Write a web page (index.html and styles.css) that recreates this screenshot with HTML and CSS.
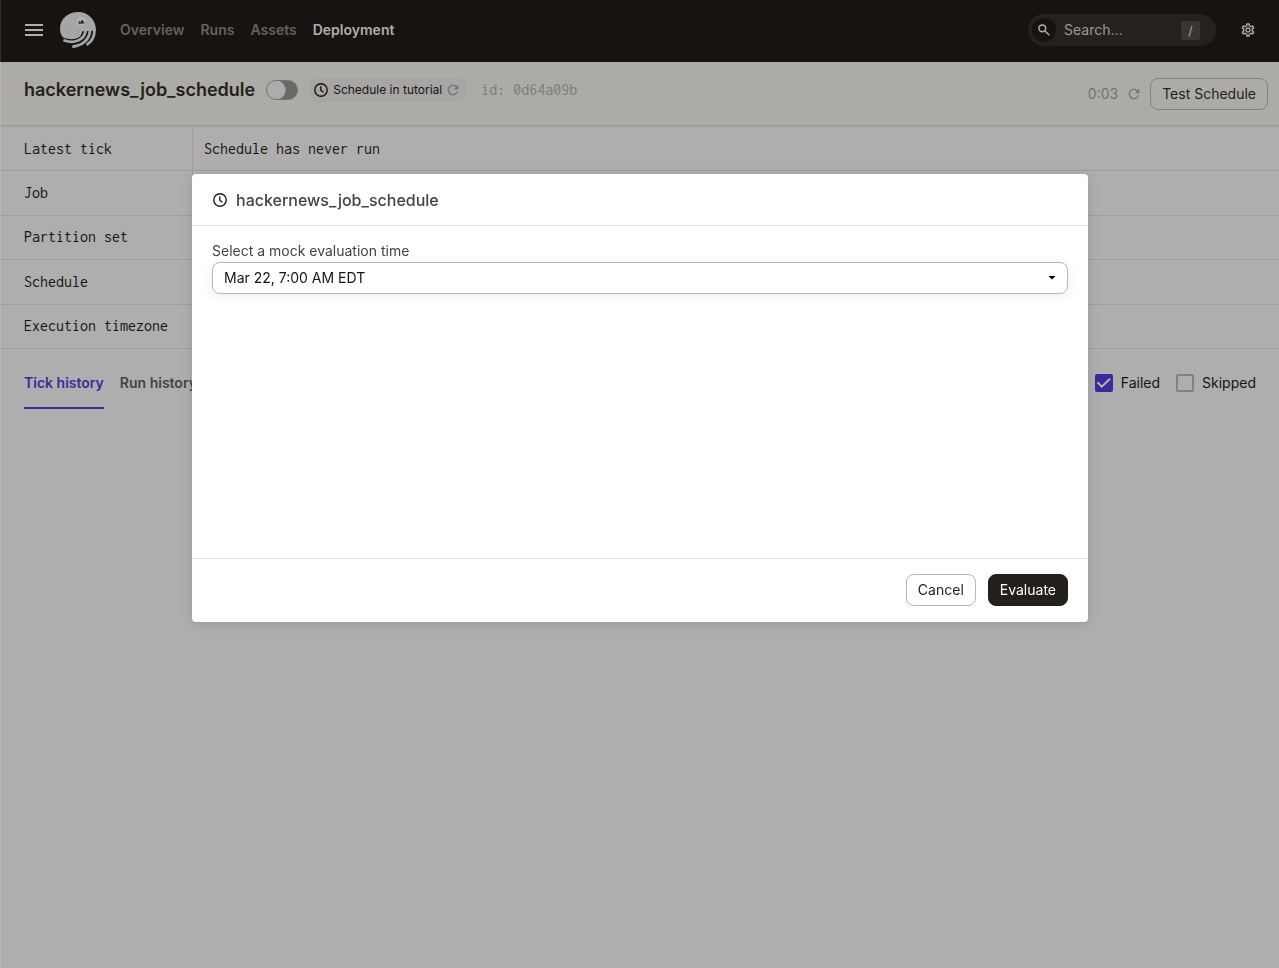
FILE: index.html
```html
<!DOCTYPE html>
<html lang="en">
<head>
  <meta charset="UTF-8">
  <title>hackernews_job_schedule</title>
  <link rel="stylesheet" href="styles.css">
</head>
<body>
  <header class="topbar">
    <button class="icon-button menu" aria-label="Menu">
      <svg width="18" height="12" viewBox="0 0 18 12"><path d="M0 0h18v2H0zM0 5h18v2H0zM0 10h18v2H0z" fill="currentColor"/></svg>
    </button>
    <a class="logo" href="#" aria-label="Home">
      <svg width="36" height="36" viewBox="0 0 36 36">
        <path d="M18 0C28 0 36 7.500 36 18.500L22 19.500C22 27 12 29 3 25.500C1 23 0 20 0 16.500C0 7 8 0 18 0Z" fill="#a6a6a7"/>
        <g fill="none" stroke="#a6a6a7" stroke-width="2.800" stroke-linecap="round">
          <path d="M4.500 28.500C14 32 24 28 25.500 19.500"/>
          <path d="M13.500 34.500C22 33.500 29 28 29.900 19.500"/>
          <path d="M27.500 32.200C31.500 29.500 34.500 25 34.500 18"/>
        </g>
        <circle cx="21" cy="9" r="4.200" fill="#b5b5b6"/>
        <path d="M18.600 11.800C17.500 6.800 24.500 6.500 24.200 11.500Z" fill="#2a2724"/>
        <circle cx="20.400" cy="9" r="1" fill="#b5b5b6"/>
        <g fill="#808084"><circle cx="4.500" cy="18" r=".5"/><circle cx="7" cy="15.500" r=".5"/><circle cx="7.500" cy="20.500" r=".5"/><circle cx="17" cy="21.500" r=".5"/><circle cx="19" cy="19" r=".5"/></g>
      </svg>
    </a>
    <nav class="nav">
      <a href="#">Overview</a>
      <a href="#">Runs</a>
      <a href="#">Assets</a>
      <a href="#" class="active">Deployment</a>
    </nav>
    <label class="search">
      <span class="search-icon">
        <svg width="12" height="12" viewBox="0 0 12 12" fill="none" stroke="currentColor" stroke-width="1.500"><circle cx="4.300" cy="4.300" r="3.400"/><path d="M6.800 6.800L11.300 11.300"/></svg>
      </span>
      <input type="text" placeholder="Search…" aria-label="Search">
      <kbd>/</kbd>
    </label>
    <button class="icon-button" aria-label="Settings">
      <svg width="16" height="16" viewBox="0 0 24 24" fill="currentColor"><path d="M19.430 12.980c.04-.32.07-.64.07-.98 0-.34-.03-.66-.07-.98l2.110-1.650c.19-.15.24-.42.12-.64l-2-3.460c-.09-.16-.26-.25-.44-.25-.06 0-.12.010-.17.030l-2.490 1c-.52-.4-1.080-.73-1.690-.98l-.38-2.650C14.460 2.180 14.250 2 14 2h-4c-.25 0-.46.18-.49.42l-.38 2.650c-.61.25-1.170.59-1.690.98l-2.490-1c-.06-.02-.12-.03-.18-.03-.17 0-.34.090-.43.25l-2 3.460c-.13.22-.07.49.12.64l2.110 1.650c-.04.32-.07.65-.07.98 0 .33.030.66.070.98l-2.110 1.650c-.19.15-.24.42-.12.64l2 3.460c.09.16.26.25.44.25.06 0 .12-.01.17-.03l2.490-1c.52.4 1.080.73 1.690.98l.38 2.650c.03.24.24.42.49.42h4c.25 0 .46-.18.49-.42l.38-2.650c.61-.25 1.170-.59 1.690-.98l2.490 1c.06.020.12.030.18.030.17 0 .34-.09.43-.25l2-3.460c.12-.22.070-.49-.12-.64l-2.110-1.650zm-1.980-1.710c.04.31.050.52.050.73 0 .21-.02.43-.05.73l-.14 1.130.89.7 1.080.84-.7 1.210-1.270-.51-1.040-.42-.9.68c-.43.32-.84.56-1.250.73l-1.060.43-.16 1.130-.2 1.350h-1.400l-.19-1.350-.16-1.130-1.060-.43c-.43-.18-.83-.41-1.230-.71l-.91-.7-1.060.43-1.270.51-.7-1.210 1.080-.84.89-.7-.14-1.130c-.03-.31-.05-.54-.05-.74s.02-.43.050-.73l.14-1.130-.89-.7-1.080-.84.7-1.210 1.270.51 1.040.42.9-.68c.43-.32.84-.56 1.250-.73l1.060-.43.16-1.130.2-1.350h1.390l.19 1.350.16 1.130 1.060.43c.43.18.83.41 1.230.71l.91.7 1.060-.43 1.270-.51.7 1.210-1.070.85-.89.7.14 1.130zM12 8c-2.210 0-4 1.790-4 4s1.790 4 4 4 4-1.790 4-4-1.790-4-4-4zm0 6c-1.100 0-2-.9-2-2s.9-2 2-2 2 .9 2 2-.9 2-2 2z"/></svg>
    </button>
  </header>

  <section class="page-header">
    <div class="page-title">
      <h1>hackernews_job_schedule</h1>
      <input type="checkbox" class="switch" aria-label="Schedule running">
      <span class="tag">
        <svg width="14" height="14" viewBox="0 0 14 14" fill="none" stroke="currentColor" stroke-width="1.400"><circle cx="7" cy="7" r="6.200"/><path d="M6.800 3.200V7.200L9.500 9.300"/></svg>
        <span>Schedule in tutorial</span>
        <svg class="muted" width="12" height="12" viewBox="3 3 18 18" fill="currentColor"><path d="M17.650 6.350C16.200 4.900 14.210 4 12 4c-4.420 0-7.990 3.580-7.990 8s3.570 8 7.990 8c3.730 0 6.840-2.550 7.730-6h-2.080c-.82 2.330-3.040 4-5.650 4-3.310 0-6-2.690-6-6s2.690-6 6-6c1.660 0 3.140.69 4.220 1.780L13 11h7V4l-2.350 2.350z"/></svg>
      </span>
      <span class="job-id">id: 0d64a09b</span>
    </div>
    <div class="page-actions">
      <span>0:03</span>
      <button class="icon-button refresh" aria-label="Refresh">
        <svg width="12" height="12" viewBox="3 3 18 18" fill="currentColor"><path d="M17.650 6.350C16.200 4.900 14.210 4 12 4c-4.420 0-7.990 3.580-7.990 8s3.570 8 7.990 8c3.730 0 6.840-2.550 7.730-6h-2.080c-.82 2.330-3.040 4-5.650 4-3.310 0-6-2.690-6-6s2.690-6 6-6c1.660 0 3.140.69 4.220 1.780L13 11h7V4l-2.350 2.350z"/></svg>
      </button>
      <button class="button test">Test Schedule</button>
    </div>
  </section>

  <table class="details">
    <tr><th>Latest tick</th><td>Schedule has never run</td></tr>
    <tr><th>Job</th><td></td></tr>
    <tr><th>Partition set</th><td></td></tr>
    <tr><th>Schedule</th><td></td></tr>
    <tr><th>Execution timezone</th><td></td></tr>
  </table>

  <div class="history">
    <nav class="tabs">
      <a href="#" class="active">Tick history</a>
      <a href="#">Run history</a>
    </nav>
    <div class="filters">
      <label><input type="checkbox" checked>Failed</label>
      <label><input type="checkbox">Skipped</label>
    </div>
  </div>

  <div class="overlay">
    <div class="dialog" role="dialog" aria-labelledby="dialog-title">
      <div class="dialog-header">
        <svg width="16" height="16" viewBox="0 0 16 16" fill="none" stroke="#231f1b" stroke-width="1.400"><circle cx="8" cy="8" r="6.200"/><path d="M7.800 4.500V8.200L10.300 10.300"/></svg>
        <h2 id="dialog-title">hackernews_job_schedule</h2>
      </div>
      <div class="dialog-body">
        <label for="eval-time">Select a mock evaluation time</label>
        <div class="select">
          <select id="eval-time">
            <option>Mar 22, 7:00 AM EDT</option>
          </select>
          <svg width="8" height="4" viewBox="0 0 8 4"><path d="M.5 0h7L4 3.500z" fill="#000"/></svg>
        </div>
      </div>
      <div class="dialog-footer">
        <button class="button">Cancel</button>
        <button class="button primary">Evaluate</button>
      </div>
    </div>
  </div>
</body>
</html>
```
FILE: styles.css
```css
* {
  box-sizing: border-box;
}
body {
  margin: 0;
  min-height: 100vh;
  background-color: #aeaeae;
  color: #171512;
  font-family: Inter, sans-serif;
  font-size: 14px;
  line-height: 20px;
}
a {
  color: inherit;
  text-decoration: none;
}
h1, h2 {
  margin: 0;
}
svg {
  display: block;
  flex-shrink: 0;
}
button, input, select {
  font: inherit;
  color: inherit;
}
.icon-button {
  display: flex;
  padding: 0;
  border: none;
  background: none;
  cursor: pointer;
}
.topbar {
  display: flex;
  align-items: center;
  height: 62px;
  padding: 0 23px 2px 25px;
  background-color: #171310;
  color: #aeaeae;
}
.logo {
  margin: 0 24px 0 17px;
}
.nav {
  display: flex;
  gap: 16px;
  flex: 1;
  font-weight: 600;
  color: #646260;
}
.nav .active {
  color: #aeaeae;
}
.search {
  display: flex;
  align-items: center;
  width: 188px;
  height: 32px;
  margin-right: 24px;
  padding: 0 16px 0 4px;
  border-radius: 16px;
  background-color: #25221d;
}
.search-icon {
  display: flex;
  align-items: center;
  justify-content: center;
  width: 24px;
  height: 24px;
  border-radius: 12px;
  background-color: #171310;
}
.search input {
  flex: 1;
  min-width: 0;
  padding: 0 8px;
  border: none;
  outline: none;
  background: none;
}
.search input::placeholder {
  color: #9b9997;
  opacity: 1;
}
.search kbd {
  width: 19px;
  height: 19px;
  border-radius: 3px;
  background-color: #383633;
  text-align: center;
  font-family: inherit;
  font-size: 12px;
}
.page-header {
  display: flex;
  justify-content: space-between;
  height: 65px;
  padding: 16px 11px 0 24px;
  border-bottom: 2px solid #a09f9d;
  background-color: #acaba8;
}
.page-title {
  display: flex;
  align-items: center;
  height: 24px;
}
.page-title h1 {
  font-size: 18px;
  font-weight: 600;
  line-height: 24px;
  color: #231f1b;
}
.switch {
  appearance: none;
  width: 32px;
  height: 20px;
  margin: 0 11px;
  border-radius: 10px;
  border: 1px solid #737271;
  background: radial-gradient(circle at 9px 9px, #acacab 9px, #6a6968 10px);
}
.tag {
  display: flex;
  align-items: center;
  gap: 5px;
  height: 24px;
  padding: 0 8px 0 5px;
  border-radius: 8px;
  background-color: #a7a6a5;
  font-size: 12px;
}
.muted {
  color: #737271;
}
.job-id {
  margin-left: 14px;
  color: #7c7b79;
}
.job-id, .details {
  font-family: Inconsolata, "Liberation Mono", monospace;
  font-size: 16px;
}
.page-actions {
  display: flex;
  align-items: center;
  height: 32px;
  color: #737271;
}
.refresh {
  margin: 0 10px;
}
.button {
  height: 32px;
  padding: 0 11px;
  border: 1px solid #b8b7b6;
  border-radius: 8px;
  background: none;
  color: #231f1b;
  cursor: pointer;
}
.button.test {
  border-color: #838281;
}
.button.primary {
  border-color: #231f1b;
  background-color: #231f1b;
  color: #fff;
}
.details {
  width: 100%;
  height: 222px;
  border-spacing: 0;
}
.details th, .details td {
  padding: 0 11px;
  border-bottom: 1px solid #9e9e9f;
  text-align: left;
  font-weight: normal;
}
.details th {
  width: 193px;
  padding-left: 24px;
  border-right: 1px solid #9e9e9f;
}
.history {
  display: flex;
  justify-content: space-between;
  align-items: flex-start;
  padding: 24px 23px 0 24px;
}
.tabs {
  display: flex;
  gap: 16px;
  font-weight: 600;
  color: #444341;
}
.tabs a {
  padding-bottom: 14px;
  border-bottom: 2px solid transparent;
}
.tabs .active {
  border-color: #382c9b;
  color: #382c9b;
}
.filters {
  display: flex;
  gap: 16px;
}
.filters label {
  display: flex;
  align-items: center;
  gap: 8px;
}
.filters input {
  appearance: none;
  display: grid;
  place-items: center;
  width: 18px;
  height: 18px;
  margin: 0;
  border: 2px solid #838281;
  border-radius: 2px;
}
.filters input:checked {
  border-color: #382c9b;
  background-color: #382c9b;
}
.filters input:checked::before {
  content: "";
  width: 14px;
  height: 10px;
  background-color: #b4b4b4;
  clip-path: polygon(0 50%, 10% 36%, 36% 72%, 90% 0, 100% 14%, 36% 100%);
}
.overlay {
  position: fixed;
  inset: 0;
  padding-top: 18vh;
  border-left: 1px solid rgba(255, 255, 255, 0.12);
}
.dialog {
  max-width: 896px;
  margin: 0 auto;
  border-radius: 4px;
  background-color: #fff;
  box-shadow: 0 2px 12px rgba(0, 0, 0, 0.12);
}
.dialog-header {
  display: flex;
  align-items: center;
  gap: 8px;
  padding: 16px 20px 15px;
  border-bottom: 1px solid #e5e5e4;
}
.dialog-header h2 {
  font-size: 16px;
  font-weight: 500;
  color: #444341;
}
.dialog-body {
  min-height: 332px;
  padding: 15px 20px;
  color: #444341;
}
.select {
  display: flex;
  align-items: center;
  margin-top: 1px;
  padding-right: 11px;
  border: 1px solid #b8b7b6;
  border-radius: 8px;
  box-shadow: 0 2px 12px rgba(0, 0, 0, 0.08);
}
.select select {
  appearance: none;
  flex: 1;
  height: 30px;
  padding: 0 11px;
  border: none;
  outline: none;
  background: none;
  color: #171310;
}
.dialog-footer {
  display: flex;
  justify-content: flex-end;
  gap: 12px;
  padding: 15px 20px 16px;
  border-top: 1px solid #e5e5e4;
}
```
